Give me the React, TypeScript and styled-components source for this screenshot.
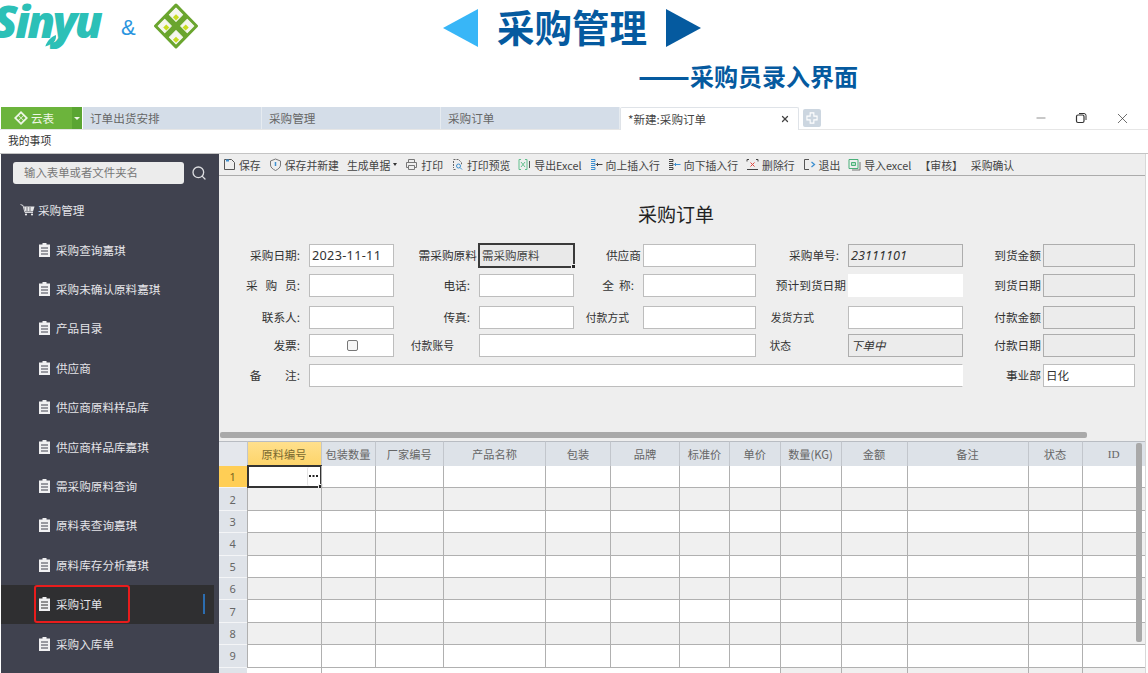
import styled, { createGlobalStyle } from "styled-components";
import { Minus, Search, X } from "lucide-react";
import type { ReactNode } from "react";

const CJK = `"Noto Sans CJK SC", "Noto Sans", sans-serif`;

const GlobalStyle = createGlobalStyle`
  html, body {
    margin: 0;
    padding: 0;
    background: #fff;
    overflow: hidden;
  }
  * {
    box-sizing: border-box;
  }
  #root {
    width: 1148px;
    height: 673px;
    overflow: hidden;
    font-family: ${CJK};
  }
`;

const tabs = ["订单出货安排", "采购管理", "采购订单"];

const menuItems = [
  "采购查询嘉琪",
  "采购未确认原料嘉琪",
  "产品目录",
  "供应商",
  "供应商原料样品库",
  "供应商样品库嘉琪",
  "需采购原料查询",
  "原料表查询嘉琪",
  "原料库存分析嘉琪",
  "采购订单",
  "采购入库单",
];

const columns = [
  "原料编号",
  "包装数量",
  "厂家编号",
  "产品名称",
  "包装",
  "品牌",
  "标准价",
  "单价",
  "数量(KG)",
  "金额",
  "备注",
  "状态",
  "ID",
];

// toolbar icons, drawn small like the desktop app's bitmap ones
function ToolIcon({ children }: { children: ReactNode }) {
  return (
    <svg width="13" height="13" viewBox="0 0 13 13" fill="none" strokeWidth="1">
      {children}
    </svg>
  );
}

const SaveIcon = () => (
  <ToolIcon>
    <path d="M1.5 1.5h7l3 3v7h-10z" stroke="#555" />
    <path d="M3 1.5h3v2H3z" fill="#3c8fd0" />
  </ToolIcon>
);
const ShieldIcon = () => (
  <ToolIcon>
    <path d="M6.5 1 11.5 3v4c0 2.5-2.5 4.3-5 5.5C4 11.3 1.5 9.500 1.500 7V3z" stroke="#777" />
    <path d="M6.5 4v4" stroke="#3c8fd0" strokeWidth="1.500" />
  </ToolIcon>
);
const PrintIcon = () => (
  <ToolIcon>
    <path d="M3.500 4V1.500h6V4M1.500 4.500h10v5h-2M3.500 9.500h-2v-5M3.500 7.500h6v4h-6z" stroke="#777" />
  </ToolIcon>
);
const PreviewIcon = () => (
  <ToolIcon>
    <path d="M2.500 1.500h5l3 3v2M2.500 3v7M2.500 11.500h3" stroke="#666" strokeDasharray="2 1" />
    <circle cx="7.500" cy="8" r="2" stroke="#3c8fd0" />
    <path d="m9 9.500 2 2" stroke="#3c8fd0" />
  </ToolIcon>
);
const ExcelIcon = () => (
  <ToolIcon>
    <path d="M3 1.500H1v10h2M7 1.500h2v10H7" stroke="#63c08e" />
    <path d="m3 4 4 5M7 4 3 9" stroke="#63c08e" />
    <path d="M11.500 3v7" stroke="#555" />
  </ToolIcon>
);
const InsertIcon = ({ down }: { down?: boolean }) => (
  <ToolIcon>
    <path d="M1 1.500h4v2H1M1 5.500h4v2H1M1 9.500h4v2H1" stroke={down ? "#444" : "#3c8fd0"} />
    <path d="M12.500 6.500H6.500M8 5 6.500 6.500 8 8" stroke={down ? "#3c8fd0" : "#444"} />
  </ToolIcon>
);
const DeleteIcon = () => (
  <ToolIcon>
    <path d="M1 1.500h2M10 1.500h2M1 11.500h11M1 1.500v2M12 1.500v2" stroke="#444" />
    <path d="m4.500 4.500 4 4M8.500 4.500l-4 4" stroke="#e0443c" />
  </ToolIcon>
);
const ExitIcon = () => (
  <ToolIcon>
    <path d="M6 1.500H1.500v10H6" stroke="#555" />
    <path d="m8.500 4 3 2.500-3 2.500" stroke="#3c8fd0" strokeWidth="1.300" />
  </ToolIcon>
);
const ImportIcon = () => (
  <ToolIcon>
    <path d="M1 1.500h9v9H1z" stroke="#4ab07a" />
    <path d="M3.500 4.500h4v3h-4z" fill="#b8e2c8" stroke="#4ab07a" />
    <path d="M12 4v8H4" stroke="#777" />
  </ToolIcon>
);

function DocIcon() {
  return (
    <svg width="11" height="14" viewBox="0 0 11 14">
      <path
        fillRule="evenodd"
        d="M3.500 0h4v1.500H11V14H0V1.500h3.500zM2 4.500v1h7v-1zM2 7.500v1h7v-1zM2 10.500v1h7v-1z"
        fill="#f0f0f2"
      />
    </svg>
  );
}

function CartIcon() {
  return (
    <svg width="15" height="12" viewBox="0 0 15 12" fill="none">
      <path d="M0.500 0.500 3 1.500l2 7h8" stroke="#e8e8ea" strokeWidth="0.900" />
      <path d="M4 2.500h10.500L13 7.500H5.300z" fill="#e8e8ea" />
      <path d="M7 3v4M10 3v4" stroke="#40424f" strokeWidth="0.700" />
      <circle cx="6" cy="10.500" r="1.100" fill="#e8e8ea" />
      <circle cx="12" cy="10.500" r="1.100" fill="#e8e8ea" />
    </svg>
  );
}

function DiamondLogo() {
  // centre of each white cell, then where its yellow-green corner sits
  const cells = [
    [22, 11.5, 22, 14],
    [33, 22.5, 31.5, 24],
    [22, 33.5, 22, 36],
    [11, 22.5, 12.5, 24],
  ];
  return (
    <svg width="46" height="46" viewBox="0 0 44 45">
      <path d="M22 2 42 22.500 22 43 2 22.500z" fill="#6aa52e" stroke="#6aa52e" strokeWidth="3" strokeLinejoin="round" />
      {cells.map(([x, y, yx, yy]) => (
        <g key={`${x}-${y}`}>
          <path d={`M${x} ${y - 6.5}l6.500 6.500-6.500 6.500-6.500-6.500z`} fill="#f5f6ef" stroke="#f5f6ef" strokeWidth="1" strokeLinejoin="round" />
          <path d={`M${yx} ${yy - 3}l3 3-3 3-3-3z`} fill="#c7dc1f" />
        </g>
      ))}
    </svg>
  );
}

function SmallDiamond() {
  return (
    <svg width="14" height="14" viewBox="0 0 14 14">
      <path d="M7 0l7 7-7 7-7-7z" fill="#eef6e6" />
      <path d="M7 2.500 9 4.500 7 6.500 5 4.500zM7 7.500 9 9.500 7 11.500 5 9.500zM4.500 5 6.500 7 4.500 9 2.500 7zM9.500 5 11.500 7 9.500 9 7.500 7z" fill="#6cb43c" />
    </svg>
  );
}

function App() {
  const rows = [1, 2, 3, 4, 5, 6, 7, 8, 9];

  return (
    <Page>
      <GlobalStyle />
      <Banner>
        <LogoGroup>
          <Brand>
            Sinyu
            <BrandLeaf viewBox="0 0 16 16">
              <path d="M14 0c1 7-3 11-13 14C3 8 7 3 14 0z" fill="#2cc0b7" />
            </BrandLeaf>
          </Brand>
          <Amp>&amp;</Amp>
          <DiamondLogo />
        </LogoGroup>
        <TitleBlock>
          <TitleLine>
            <svg width="36" height="38" viewBox="0 0 36 38">
              <path d="M0 19 35 0v38z" fill="#38b6f7" />
            </svg>
            <MainTitle>采购管理</MainTitle>
            <svg width="36" height="38" viewBox="0 0 36 38">
              <path d="M36 19 1 0v38z" fill="#055a9f" />
            </svg>
          </TitleLine>
          <SubTitle>
            <Dashes>——</Dashes>采购员录入界面
          </SubTitle>
        </TitleBlock>
      </Banner>

      <TabBar>
        <AppButton>
          <SmallDiamond />
          云表
        </AppButton>
        <AppCaret />
        {tabs.map((t) => (
          <Tab key={t}>{t}</Tab>
        ))}
        <ActiveTab>
          *新建:采购订单
          <X size={10} strokeWidth={3} color="#444" />
        </ActiveTab>
        <AddTab>
          <svg width="12" height="12" viewBox="0 0 13 13">
            <path
              d="M4.500 1h4v3.500H12v4H8.500V12h-4V8.500H1v-4h3.500z"
              fill="#ccd6e0"
              stroke="#fff"
              strokeWidth="1.200"
            />
          </svg>
        </AddTab>
        <WindowControls>
          <Minus size={14} strokeWidth={1} color="#444" />
          <svg width="12" height="12" viewBox="0 0 12 12" fill="none" stroke="#333">
            <rect x="1.500" y="3" width="7.500" height="7.500" rx="1.500" strokeWidth="1.200" />
            <path d="M4 1.500h5a2 2 0 0 1 2 2V8" strokeWidth="1" />
          </svg>
          <X size={17} strokeWidth={1} color="#333" />
        </WindowControls>
      </TabBar>

      <SubBar>我的事项</SubBar>

      <Workspace>
        <Sidebar>
          <SearchRow>
            <SearchBox>输入表单或者文件夹名</SearchBox>
            <Search size={16} strokeWidth={2} color="#dcdde0" />
          </SearchRow>
          <TreeHead>
            <CartIcon />
            采购管理
          </TreeHead>
          {menuItems.map((m) => (
            <MenuItem key={m} $active={m === "采购订单"}>
              <DocIcon />
              {m}
              {m === "采购订单" && <ActiveMark />}
              {m === "采购订单" && <RedOutline />}
            </MenuItem>
          ))}
        </Sidebar>

        <Main>
          <Toolbar>
            <ToolItem><SaveIcon />保存</ToolItem>
            <ToolItem><ShieldIcon />保存并新建</ToolItem>
            <ToolItem>生成单据<Caret /></ToolItem>
            <ToolItem><PrintIcon />打印</ToolItem>
            <ToolItem><PreviewIcon />打印预览</ToolItem>
            <ToolItem><ExcelIcon />导出Excel</ToolItem>
            <ToolItem><InsertIcon />向上插入行</ToolItem>
            <ToolItem><InsertIcon down />向下插入行</ToolItem>
            <ToolItem><DeleteIcon />删除行</ToolItem>
            <ToolItem><ExitIcon />退出</ToolItem>
            <ToolItem><ImportIcon />导入excel</ToolItem>
            <ToolItem>【审核】</ToolItem>
            <ToolItem>采购确认</ToolItem>
          </Toolbar>

          <FormTitle>采购订单</FormTitle>

          <FormRow>
            <Label>采购日期:</Label>
            <Field $num>2023-11-11</Field>
            <Label $pr={2}>需采购原料</Label>
            <SelectedField>
              需采购原料
              <Handle />
            </SelectedField>
            <Label $pr={2}>供应商</Label>
            <Field />
            <Label>采购单号:</Label>
            <Field $locked $num>23111101</Field>
            <Label $pr={2}>到货金额</Label>
            <Field $locked />
          </FormRow>
          <FormRow $top={7}>
            <Label>采&nbsp;&nbsp;&nbsp;购&nbsp;&nbsp;&nbsp;员:</Label>
            <Field />
            <Label>电话:</Label>
            <Field />
            <Label>全&nbsp;&nbsp;称:</Label>
            <Field />
            <Label $pr={2}>预计到货日期</Label>
            <Field $bare />
            <Label $pr={2}>到货日期</Label>
            <Field $locked />
          </FormRow>
          <FormRow $top={9}>
            <Label>联系人:</Label>
            <Field />
            <Label>传真:</Label>
            <Field />
            <Label $pr={14} $small>付款方式</Label>
            <Field />
            <Label $pr={34} $small>发货方式</Label>
            <Field />
            <Label $pr={2}>付款金额</Label>
            <Field $locked />
          </FormRow>
          <FormRow $top={5}>
            <Label>发票:</Label>
            <Field $center>
              <CheckBox />
            </Field>
            <Label $pr={25} $small>付款账号</Label>
            <Field $span={3} />
            <Label $pr={57} $small>状态</Label>
            <Field $locked>下单中</Field>
            <Label $pr={2}>付款日期</Label>
            <Field $locked />
          </FormRow>
          <FormRow $top={7}>
            <Label>备&nbsp;&nbsp;&nbsp;&nbsp;&nbsp;&nbsp;&nbsp;&nbsp;&nbsp;注:</Label>
            <Field $span={7} $open />
            <Label $pr={2}>事业部</Label>
            <Field>日化</Field>
          </FormRow>

          <HScrollTrack>
            <HScrollThumb />
          </HScrollTrack>

          <Table>
            <TableRow $header>
              <Corner />
              {columns.map((c, i) => (
                <HeadCell key={c} $selected={i === 0} $serif={c === "ID"}>
                  {c}
                </HeadCell>
              ))}
            </TableRow>
            {rows.map((r) => (
              <TableRow key={r} $alt={r % 2 === 0}>
                <RowHead $selected={r === 1}>{r}</RowHead>
                {columns.map((c, i) => (
                  <Cell key={c}>
                    {r === 1 && i === 0 && (
                      <ActiveCell>
                        <EllipsisBtn>
                          <svg width="9" height="3" viewBox="0 0 9 3">
                            <path d="M0 0h2v2H0zM3.500 0h2v2h-2zM7 0h2v2H7z" fill="#222" />
                          </svg>
                        </EllipsisBtn>
                        <Handle />
                      </ActiveCell>
                    )}
                  </Cell>
                ))}
              </TableRow>
            ))}
            <TableRow>
              <RowHead />
              {columns.map((c, i) => (
                <Cell key={c} $grey={i >= 8} $noLine={i === 0 || (i > 1 && i < 8)} />
              ))}
            </TableRow>
            <VScrollThumb />
          </Table>
        </Main>
      </Workspace>
    </Page>
  );
}

const Page = styled.div`
  width: 1148px;
  height: 673px;
  display: flex;
  flex-direction: column;
  overflow: hidden;
  background: #fff;
`;

const Banner = styled.header`
  height: 107px;
  flex-shrink: 0;
  display: flex;
  align-items: flex-start;
`;

const LogoGroup = styled.div`
  width: 450px;
  height: 52px;
  flex-shrink: 0;
  display: flex;
  align-items: center;
  margin-left: -7px;
`;

const Brand = styled.div`
  position: relative;
  font-family: "Open Sans", sans-serif;
  font-style: italic;
  font-weight: 800;
  font-size: 45px;
  line-height: 52px;
  letter-spacing: -2.5px;
  color: #2cc0b7;
  margin-top: -11px;
  width: 128px;
`;

const BrandLeaf = styled.svg`
  position: absolute;
  left: 50px;
  top: 40px;
  width: 16px;
  height: 13px;
`;

const Amp = styled.span`
  font-family: "Liberation Sans", sans-serif;
  font-size: 22px;
  color: #2a95e0;
  width: 32px;
  margin-top: 4px;
`;

const TitleBlock = styled.div`
  flex-shrink: 0;
`;

const TitleLine = styled.div`
  display: flex;
  align-items: center;
  gap: 18px;
  height: 42px;
  margin-top: 7px;
`;

const MainTitle = styled.h1`
  align-self: flex-start;
  margin: 0;
  font-size: 37.5px;
  line-height: 38px;
  font-weight: 700;
  color: #055a9f;
`;

const SubTitle = styled.div`
  margin: 11px 0 0 195px;
  height: 28px;
  font-size: 24px;
  line-height: 28px;
  font-weight: 700;
  color: #055a9f;
  white-space: nowrap;
`;

const Dashes = styled.span`
  font-size: 30.5px;
  line-height: 28px;
  vertical-align: -1px;
`;

const TabBar = styled.nav`
  height: 23px;
  flex-shrink: 0;
  display: flex;
  align-items: stretch;
  padding-left: 1px;
  border-bottom: 1px solid #e6e6e6;
  font-size: 11.6px;
`;

const AppButton = styled.div`
  width: 71px;
  padding-left: 13px;
  display: flex;
  align-items: center;
  gap: 3px;
  background: #6cb43c;
  color: #eef6e6;
`;

const AppCaret = styled.div`
  width: 10px;
  background: #5aa532;
  position: relative;
  margin-right: 1px;
  &::after {
    content: "";
    position: absolute;
    left: 2px;
    top: 10px;
    border-left: 3px solid transparent;
    border-right: 3px solid transparent;
    border-top: 3px solid #eef6e6;
  }
`;

const Tab = styled.div`
  width: 179px;
  padding-left: 7px;
  display: flex;
  align-items: center;
  background: #d4dde8;
  color: #666;
  border-right: 1px solid #e6ebf0;
`;

const ActiveTab = styled.div`
  width: 179px;
  padding: 0 8px 0 7px;
  margin-bottom: -1px;
  display: flex;
  align-items: center;
  justify-content: space-between;
  background: #fff;
  color: #444;
  border: 1px solid #dfe3e8;
  border-bottom: 0;
  border-radius: 2px 2px 0 0;
`;

const AddTab = styled.div`
  width: 18px;
  height: 18px;
  margin: 2px 0 0 4px;
  display: flex;
  align-items: center;
  justify-content: center;
  background: #ccd6e0;
  border-radius: 2px;
`;

const WindowControls = styled.div`
  display: flex;
  align-items: center;
  margin-left: 213px;
  gap: 27px;
`;

const SubBar = styled.div`
  height: 24px;
  flex-shrink: 0;
  padding: 0 0 3px 8px;
  display: flex;
  align-items: center;
  font-size: 10.8px;
  color: #333;
  background: #fff;
  border-bottom: 1px solid #c4c4c4;
`;

const Workspace = styled.div`
  flex: 1;
  min-height: 0;
  display: flex;
  padding-left: 1px;
`;

const Sidebar = styled.aside`
  width: 218px;
  flex-shrink: 0;
  padding-top: 8px;
  background: #40424f;
  color: #e4e4e8;
  font-size: 11.6px;
`;

const SearchRow = styled.div`
  display: flex;
  align-items: center;
  gap: 7px;
  padding-left: 12px;
`;

const SearchBox = styled.div`
  width: 171px;
  height: 22px;
  padding: 0 0 3px 11px;
  display: flex;
  align-items: center;
  background: #ececec;
  border-radius: 3px;
  color: #777;
  font-size: 11.4px;
`;

const TreeHead = styled.div`
  height: 20px;
  margin: 16px 0 10px 19px;
  display: flex;
  align-items: center;
  gap: 3px;
`;

const MenuItem = styled.div<{ $active?: boolean }>`
  position: relative;
  width: 213px;
  height: 39.4px;
  padding-left: 38px;
  display: flex;
  align-items: center;
  gap: 6px;
  white-space: nowrap;
  background: ${(p) => (p.$active ? "#2f2f31" : "transparent")};
`;

const ActiveMark = styled.i`
  position: absolute;
  left: 202px;
  top: 9px;
  width: 2px;
  height: 20px;
  background: #2c6db0;
`;

const RedOutline = styled.i`
  position: absolute;
  left: 33px;
  top: 0;
  width: 96px;
  height: 38px;
  border: 2px solid #e81c1c;
  border-radius: 3px;
`;

const Main = styled.main`
  width: 927px;
  flex-shrink: 0;
  background: #eeeeee;
  border-right: 1px solid #d8d8d8;
`;

const Toolbar = styled.div`
  height: 22px;
  display: flex;
  align-items: center;
  gap: 8px;
  padding-left: 4px;
  border-bottom: 1px solid #ababab;
  font-size: 10.85px;
  color: #444;
  white-space: nowrap;
`;

const ToolItem = styled.div`
  display: flex;
  align-items: center;
  gap: 3px;
`;

const Caret = styled.i`
  border-left: 2.5px solid transparent;
  border-right: 2.5px solid transparent;
  border-top: 3px solid #333;
`;

const FormTitle = styled.h2`
  margin: 25px 12px 17px 0;
  text-align: center;
  font-size: 19px;
  line-height: 26px;
  font-weight: 400;
  color: #222;
`;

const FormRow = styled.div<{ $top?: number }>`
  display: grid;
  grid-template-columns: 90px 85px 85px 95px 69px 113px 92px 115px 80px 92px;
  height: 23px;
  margin-top: ${(p) => p.$top ?? 0}px;
  color: #333;
`;

const Label = styled.label<{ $pr?: number; $small?: boolean }>`
  display: flex;
  align-items: center;
  justify-content: flex-end;
  white-space: nowrap;
  padding-bottom: 2px;
  padding-right: ${(p) => p.$pr ?? 9}px;
  font-size: ${(p) => (p.$small ? "10.8px" : "11.7px")};
`;

const Field = styled.div<{
  $locked?: boolean;
  $bare?: boolean;
  $open?: boolean;
  $center?: boolean;
  $num?: boolean;
  $span?: number;
}>`
  grid-column: span ${(p) => p.$span ?? 1};
  display: flex;
  align-items: center;
  justify-content: ${(p) => (p.$center ? "center" : "flex-start")};
  padding: 0 0 1px 2px;
  background: ${(p) => (p.$locked ? "#ececec" : "#fff")};
  border: 1px solid ${(p) => (p.$bare ? "#fff" : p.$locked ? "#adadad" : "#bdbdbd")};
  border-right-color: ${(p) => (p.$open ? "#fff" : "")};
  font-style: ${(p) => (p.$locked ? "italic" : "normal")};
  font-family: ${(p) => (p.$num ? `"Noto Sans", ${CJK}` : CJK)};
  font-size: ${(p) => (p.$num ? "12.7px" : "11.5px")};
  letter-spacing: ${(p) => (p.$num && !p.$locked ? "0.3px" : "0")};
  color: #333;
`;

const SelectedField = styled.div`
  position: relative;
  margin: -1px -1px -1px -1px;
  padding: 0 0 2px 2px;
  display: flex;
  align-items: center;
  background: #e9e9e9;
  border: 2px solid #3a3a3a;
  font-size: 11.5px;
  color: #444;
`;

const Handle = styled.i`
  position: absolute;
  right: -3px;
  bottom: -3px;
  width: 5px;
  height: 5px;
  background: #222;
  border: 1px solid #eee;
`;

const CheckBox = styled.span`
  width: 11px;
  height: 11px;
  border: 1px solid #777;
  border-radius: 2px;
  background: #f6f6f6;
`;

const HScrollTrack = styled.div`
  height: 6px;
  margin: 45px 0 3px;
  padding-left: 1px;
`;

const HScrollThumb = styled.div`
  width: 867px;
  height: 6px;
  background: #a9a9a9;
  border-radius: 2px;
`;

const Table = styled.div`
  position: relative;
  font-size: 11.2px;
`;

const TableRow = styled.div<{ $header?: boolean; $alt?: boolean }>`
  display: grid;
  grid-template-columns: 27.5px 74px 54px 68.5px 102px 65px 69px 50px 50.5px 61px 66px 121px 54px 63.5px;
  height: ${(p) => (p.$header ? "25px" : "22.4px")};
  background: ${(p) => (p.$alt ? "#f0f0f0" : "#fff")};
`;

const Corner = styled.div`
  background: #e4e7ec;
  border-top: 1px solid #b8bcc2;
`;

const HeadCell = styled.div<{ $selected?: boolean; $serif?: boolean }>`
  display: flex;
  align-items: center;
  justify-content: center;
  white-space: nowrap;
  color: ${(p) => (p.$selected ? "#7a6a30" : "#666")};
  background: ${(p) => (p.$selected ? "linear-gradient(#ffe08c, #fdd469)" : "#dde2e8")};
  border-top: 1px solid #b8bcc2;
  border-left: 1px solid #c2c6cc;
  font-family: ${(p) => (p.$serif ? `"Liberation Serif", serif` : CJK)};
`;

const RowHead = styled.div<{ $selected?: boolean }>`
  display: flex;
  align-items: center;
  justify-content: center;
  font-family: "Noto Sans", sans-serif;
  font-size: 11px;
  color: ${(p) => (p.$selected ? "#7a6420" : "#666")};
  background: ${(p) => (p.$selected ? "#ffce55" : "#dfe3e9")};
  border-bottom: 1px solid #f4f5f7;
`;

const Cell = styled.div<{ $grey?: boolean; $noLine?: boolean }>`
  position: relative;
  background: ${(p) => (p.$grey ? "#f0f0f0" : "transparent")};
  border-left: 1px solid ${(p) => (p.$noLine ? "#fff" : "#b0b0b0")};
  border-bottom: 1px solid #b0b0b0;
`;

const ActiveCell = styled.div`
  position: absolute;
  left: -1px;
  top: -1px;
  right: -1px;
  bottom: -1px;
  background: #fff;
  border: 2px solid #333;
  display: flex;
  justify-content: flex-end;
`;

const EllipsisBtn = styled.span`
  width: 13px;
  display: flex;
  align-items: center;
  justify-content: center;
  background: #fff;
  border-left: 1px solid #e4e4e4;
  border-radius: 2px;
`;

const VScrollThumb = styled.div`
  position: absolute;
  left: 917px;
  top: 2px;
  width: 6px;
  height: 199px;
  background: #a9a9a9;
  border-radius: 2px;
`;

export default App;
